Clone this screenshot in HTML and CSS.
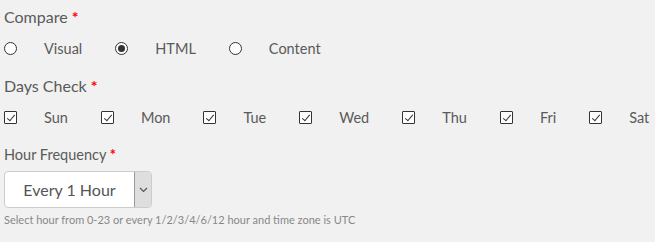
FILE: index.html
```html
<!DOCTYPE html>
<html lang="en">
<head>
  <meta charset="UTF-8">
  <title>Schedule</title>
  <link rel="stylesheet" href="styles.css">
</head>
<body>
  <div class="form">
    <div class="field">
      <div class="field-label">Compare <span class="req">*</span></div>
      <div class="opts">
        <label class="opt"><input type="radio" name="cmp"><span>Visual</span></label>
        <label class="opt"><input type="radio" name="cmp" checked><span>HTML</span></label>
        <label class="opt"><input type="radio" name="cmp"><span>Content</span></label>
      </div>
    </div>
    <div class="field">
      <div class="field-label">Days Check <span class="req">*</span></div>
      <div class="opts">
        <label class="opt"><input type="checkbox" checked><span>Sun</span></label>
        <label class="opt"><input type="checkbox" checked><span>Mon</span></label>
        <label class="opt"><input type="checkbox" checked><span>Tue</span></label>
        <label class="opt"><input type="checkbox" checked><span>Wed</span></label>
        <label class="opt"><input type="checkbox" checked><span>Thu</span></label>
        <label class="opt"><input type="checkbox" checked><span>Fri</span></label>
        <label class="opt"><input type="checkbox" checked><span>Sat</span></label>
      </div>
    </div>
    <div class="field">
      <div class="field-label small">Hour Frequency <span class="req">*</span></div>
      <div class="select">
        <span class="select-value">Every 1 Hour</span>
        <span class="select-btn">
          <svg width="9" height="6" viewBox="0 0 9 6"><path d="M1 1l3.5 3.5L8 1" fill="none" stroke="#555" stroke-width="1.2"/></svg>
        </span>
      </div>
      <div class="hint">Select hour from 0-23 or every 1/2/3/4/6/12 hour and time zone is UTC</div>
    </div>
  </div>
</body>
</html>
```

FILE: styles.css
```css
html, body {
  margin: 0;
  padding: 0;
  background: #f1f1f1;
}
.form {
  padding: 7px 4px 0 4px;
  font-family: Lato, "Open Sans", sans-serif;
  color: #5a5a5a;
}
.field-label {
  font-size: 16px;
  line-height: 20px;
  margin-bottom: 12px;
}
.field-label.small {
  font-size: 14.5px;
  margin-bottom: 6px;
}
.req {
  color: #f00;
  font-weight: bold;
}
.opts {
  display: flex;
  align-items: center;
  height: 18px;
  margin-bottom: 19px;
}
.opt {
  display: flex;
  align-items: center;
  font-size: 14.5px;
  margin-right: 33px;
}
.opt span {
  margin-left: 27px;
}
.opt input {
  -webkit-appearance: none;
  appearance: none;
  margin: 0;
  width: 13px;
  height: 13px;
  border: 1px solid #333;
  background: #fff;
  position: relative;
}
.opt input[type=radio] {
  border-radius: 50%;
}
.opt input[type=radio]:checked::after {
  content: '';
  position: absolute;
  left: 2px;
  top: 2px;
  width: 7px;
  height: 7px;
  border-radius: 50%;
  background: #333;
}
.opt input[type=checkbox] {
  border-radius: 1px;
}
.opt input[type=checkbox]:checked::after {
  content: '';
  position: absolute;
  left: 4px;
  top: 1px;
  width: 3px;
  height: 7px;
  border: solid #333;
  border-width: 0 1.5px 1.5px 0;
  transform: rotate(40deg);
}
.select {
  display: flex;
  width: 148px;
  height: 37px;
  box-sizing: border-box;
  border: 1px solid #ccc;
  border-radius: 4px;
  background: #fff;
  overflow: hidden;
}
.select-value {
  flex: 1;
  display: flex;
  align-items: center;
  justify-content: center;
  font-size: 16px;
  color: #555;
}
.select-btn {
  width: 16px;
  display: flex;
  align-items: center;
  justify-content: center;
  background: #dedede;
  border-left: 1px solid #999;
}
.hint {
  margin-top: 5px;
  font-size: 11px;
  color: #888;
}
```
